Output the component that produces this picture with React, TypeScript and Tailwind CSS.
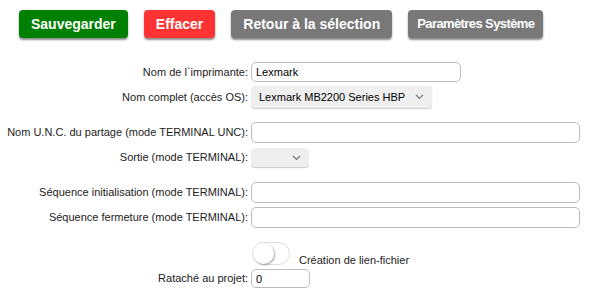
import React from 'react';

const font = { fontFamily: '"Liberation Sans", Arial, sans-serif' };

function Label({ children }: { children: React.ReactNode }) {
  return (
    <div className="w-[251px] shrink-0 whitespace-nowrap pr-[3px] text-right text-[11px] text-[#222]">
      {children}
    </div>
  );
}

function TextInput({ value, width, height }: { value?: string; width: string; height: string }) {
  return (
    <input
      readOnly
      value={value ?? ''}
      className={`${width} ${height} rounded-[5px] border border-[#bcbcbc] bg-white px-[4px] text-[11px] text-black outline-none`}
    />
  );
}

function Chevron() {
  return (
    <svg width="9" height="6" viewBox="0 0 9 6" className="shrink-0">
      <path d="M1 1 L4.5 4.5 L8 1" fill="none" stroke="#777" strokeWidth="1.2" />
    </svg>
  );
}

export default function App() {
  const buttons = [
    { label: 'Sauvegarder', cls: 'bg-[#008000] text-[14px] px-[12px]' },
    { label: 'Effacer', cls: 'bg-[#ff3333] text-[14px] px-[12px]' },
    { label: 'Retour à la sélection', cls: 'bg-[#787878] text-[14px] px-[12px]' },
    { label: 'Paramètres Système', cls: 'bg-[#787878] text-[13px] tracking-[-0.6px] px-[9px]' },
  ];

  return (
    <div className="h-[297px] w-[600px] bg-white" style={font}>
      <div className="flex gap-[16px] pl-[19px] pt-[10px]">
        {buttons.map((b) => (
          <button
            key={b.label}
            className={`${b.cls} h-[28px] rounded-[4px] font-bold text-white shadow-[0_2px_2px_rgba(0,0,0,0.45)]`}
          >
            {b.label}
          </button>
        ))}
      </div>

      <div className="mt-[24px] flex flex-col">
        <div className="flex h-[20px] items-center">
          <Label>Nom de l`imprimante:</Label>
          <TextInput value="Lexmark" width="w-[210px]" height="h-[20px]" />
        </div>
        <div className="mt-[4px] flex h-[22px] items-center">
          <Label>Nom complet (accès OS):</Label>
          <div className="flex h-[22px] w-[181px] items-center justify-between whitespace-nowrap rounded-[4px] bg-[#efefef] pl-[8px] pr-[8px] text-[11px] text-black shadow-[0_1px_1px_rgba(0,0,0,0.2)]">
            <span>Lexmark MB2200 Series HBP</span>
            <Chevron />
          </div>
        </div>

        <div className="mt-[14px] flex h-[21px] items-center">
          <Label>Nom U.N.C. du partage (mode TERMINAL UNC):</Label>
          <TextInput width="w-[329px]" height="h-[21px]" />
        </div>
        <div className="mt-[5px] flex h-[19px] items-center">
          <Label>Sortie (mode TERMINAL):</Label>
          <div className="flex h-[19px] w-[58px] items-center justify-end rounded-[4px] bg-[#efefef] pr-[8px] shadow-[0_1px_1px_rgba(0,0,0,0.2)]">
            <Chevron />
          </div>
        </div>

        <div className="mt-[15px] flex h-[21px] items-center">
          <Label>Séquence initialisation (mode TERMINAL):</Label>
          <TextInput width="w-[329px]" height="h-[21px]" />
        </div>
        <div className="mt-[4px] flex h-[21px] items-center">
          <Label>Séquence fermeture (mode TERMINAL):</Label>
          <TextInput width="w-[329px]" height="h-[21px]" />
        </div>

        <div className="mt-[14px] flex h-[23px] items-end">
          <div className="w-[252px] shrink-0" />
          <div className="relative h-[23px] w-[38px] rounded-full border border-[#dcdcdc] bg-white">
            <div className="absolute left-[0px] top-[0px] h-[21px] w-[21px] rounded-full bg-white shadow-[1px_1px_2px_rgba(0,0,0,0.35)]" />
          </div>
          <span className="mb-[-3px] ml-[9px] text-[11px] text-[#222]">Création de lien-fichier</span>
        </div>
        <div className="mt-[4px] flex h-[19px] items-center">
          <Label>Rataché au projet:</Label>
          <TextInput value="0" width="w-[59px]" height="h-[19px]" />
        </div>
      </div>
    </div>
  );
}
